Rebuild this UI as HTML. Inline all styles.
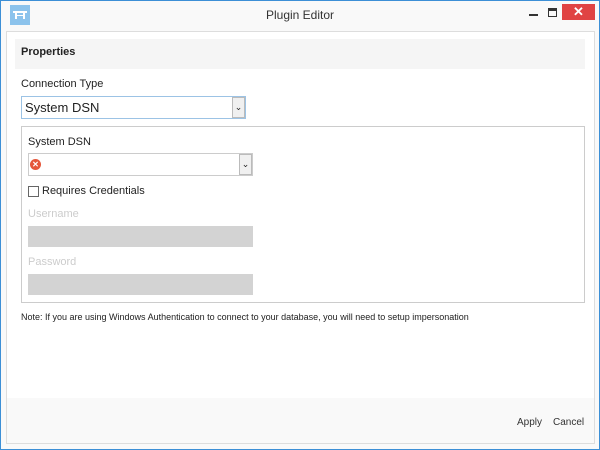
<!DOCTYPE html>
<html><head><style>
*{margin:0;padding:0;box-sizing:border-box}
body{width:600px;height:450px;background:#fff;font-family:"Segoe UI","Liberation Sans",sans-serif;position:relative;overflow:hidden;color:#222}
.a{position:absolute}
</style></head><body>
<div class="a" style="left:0;top:0;width:600px;height:450px;border:1px solid #3c8fd6;background:#f9f9f9"></div>
<div class="a" style="left:10px;top:5px;width:20px;height:20px;background:#8cc3ec"></div>
<div class="a" style="left:13px;top:11px;width:14px;height:2px;background:#fff"></div>
<div class="a" style="left:15px;top:13px;width:2px;height:6px;background:#fff"></div>
<div class="a" style="left:23px;top:13px;width:2px;height:6px;background:#fff"></div>
<div class="a" style="left:17px;top:15px;width:6px;height:1px;background:#fff"></div>
<div class="a" style="left:0;top:8px;width:600px;text-align:center;font-size:12px;color:#333">Plugin Editor</div>
<div class="a" style="left:529px;top:14px;width:9px;height:2px;background:#333"></div>
<div class="a" style="left:548px;top:8px;width:9px;height:9px;border:1px solid #333;border-top:3px solid #333"></div>
<div class="a" style="left:562px;top:4px;width:33px;height:16px;background:#e04343;color:#fff;text-align:center;font-size:13px;line-height:16px;font-weight:bold">✕</div>
<div class="a" style="left:6px;top:31px;width:589px;height:413px;border:1px solid #ddd;background:#fff"></div>
<div class="a" style="left:7px;top:398px;width:587px;height:45px;background:#f9f9f9"></div>
<div class="a" style="left:15px;top:39px;width:570px;height:30px;background:#f5f5f5"></div>
<div class="a" style="left:21px;top:46px;font-size:11px;font-weight:bold">Properties</div>
<div class="a" style="left:21px;top:78px;font-size:11px">Connection Type</div>
<div class="a" style="left:21px;top:96px;width:225px;height:23px;border:1px solid #9cc3e5;background:#fff"></div>
<div class="a" style="left:25px;top:100px;font-size:13px">System DSN</div>
<div class="a" style="left:232px;top:97px;width:13px;height:21px;border:1px solid #bbb;background:#f0f0f0;font-size:9px;text-align:center;line-height:19px">⌄</div>
<div class="a" style="left:21px;top:126px;width:564px;height:177px;border:1px solid #ccc"></div>
<div class="a" style="left:28px;top:136px;font-size:11px">System DSN</div>
<div class="a" style="left:28px;top:153px;width:225px;height:23px;border:1px solid #ccc;background:#fff"></div>
<div class="a" style="left:30px;top:159px;width:11px;height:11px;border-radius:50%;background:#e5573b;color:#fff;font-size:8px;line-height:11px;text-align:center;font-weight:bold">✕</div>
<div class="a" style="left:239px;top:154px;width:13px;height:21px;border:1px solid #bbb;background:#f0f0f0;font-size:9px;text-align:center;line-height:19px">⌄</div>
<div class="a" style="left:28px;top:186px;width:11px;height:11px;border:1px solid #666;background:#fff"></div>
<div class="a" style="left:42px;top:185px;font-size:11px">Requires Credentials</div>
<div class="a" style="left:28px;top:208px;font-size:11px;color:#ccc">Username</div>
<div class="a" style="left:28px;top:226px;width:225px;height:21px;background:#d3d3d3"></div>
<div class="a" style="left:28px;top:256px;font-size:11px;color:#ccc">Password</div>
<div class="a" style="left:28px;top:274px;width:225px;height:21px;background:#d3d3d3"></div>
<div class="a" style="left:21px;top:312px;font-size:9px">Note: If you are using Windows Authentication to connect to your database, you will need to setup impersonation</div>
<div class="a" style="left:517px;top:417px;font-size:10px;color:#333">Apply</div>
<div class="a" style="left:553px;top:417px;font-size:10px;color:#333">Cancel</div>
</body></html>
